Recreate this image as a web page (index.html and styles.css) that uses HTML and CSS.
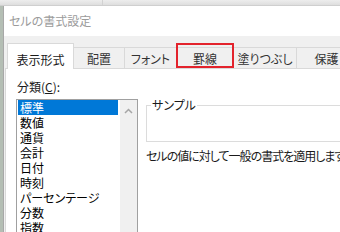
FILE: index.html
```html
<!DOCTYPE html>
<html lang="ja">
<head>
<meta charset="utf-8">
<link rel="stylesheet" href="styles.css">
</head>
<body>
<div class="screen">
  <div class="topband"><div class="seg"></div></div>
  <div class="main">
    <div class="desk"></div>
    <div class="dialog">
      <div class="titlebar"><span class="title">セルの書式設定</span></div>
      <div class="body">
        <div class="tabs">
          <div class="tab active">表示形式</div>
          <div class="tab t-align">配置</div>
          <div class="tab t-font">フォント</div>
          <div class="tab t-border marked">罫線</div>
          <div class="tab t-fill">塗りつぶし</div>
          <div class="tab t-protect">保護</div>
        </div>
        <div class="pane">
          <div class="cat-label">分類(<u>C</u>):</div>
          <div class="row">
            <div class="listbox">
              <ul class="items">
                <li class="sel">標準</li>
                <li>数値</li>
                <li>通貨</li>
                <li>会計</li>
                <li>日付</li>
                <li>時刻</li>
                <li>パーセンテージ</li>
                <li>分数</li>
                <li>指数</li>
              </ul>
              <div class="scrollbar">
                <svg class="up" width="9" height="6" viewBox="0 0 9 6"><polyline points="1,5 4.5,1.5 8,5" fill="none" stroke="#a6a6a6" stroke-width="1.5"/></svg>
              </div>
            </div>
            <div class="right">
              <fieldset class="sample"><legend>サンプル</legend><div class="sample-box"></div></fieldset>
              <p class="desc">セルの値に対して一般の書式を適用します。</p>
            </div>
          </div>
        </div>
      </div>
    </div>
  </div>
</div>
</body>
</html>
```

FILE: styles.css
```css
html, body {
  margin: 0;
  padding: 0;
  background: #ffffff;
}
body {
  width: 340px;
  height: 232px;
  overflow: hidden;
  font-family: "Noto Sans CJK JP", "Noto Sans", sans-serif;
  font-feature-settings: "palt";
  font-size: 12px;
  color: #000;
}
.screen {
  width: 340px;
  height: 232px;
  display: flex;
  flex-direction: column;
  overflow: hidden;
}
.topband {
  height: 6px;
  flex: none;
  background: linear-gradient(#ededed, #dedede);
  border-bottom: 1px solid #cfcfcf;
  box-sizing: border-box;
  display: flex;
}
.topband .seg {
  width: 102px;
  border-right: 1px solid #d2d2d2;
}
.main {
  flex: 1;
  display: flex;
  min-height: 0;
}
.desk {
  width: 3px;
  flex: none;
  background: #b4beb4;
}
.dialog {
  flex: 1;
  display: flex;
  flex-direction: column;
  border-left: 1px solid #a8a8a8;
  min-width: 0;
}
.titlebar {
  height: 30px;
  flex: none;
  background: #ffffff;
  display: flex;
  align-items: center;
  padding-left: 5px;
}
.title {
  color: #9b9b9b;
  line-height: 16px;
}
.body {
  flex: 1;
  background: #f0f0f0;
  padding: 7px 0 0 1px;
  display: flex;
  flex-direction: column;
  min-height: 0;
}
.tabs {
  display: flex;
  align-items: flex-end;
  height: 26px;
  margin: 0 0 -1px 2px;
  flex: none;
}
.tab {
  box-sizing: border-box;
  height: 22px;
  border: 1px solid #d9d9d9;
  border-left: none;
  background: #f0f0f0;
  color: #333;
  text-align: center;
  line-height: 16px;
  padding-top: 3px;
  flex: none;
  white-space: nowrap;
}
.tab.active {
  position: relative;
  z-index: 1;
  width: 67px;
  height: 26px;
  background: #ffffff;
  border-left: 1px solid #d9d9d9;
  border-bottom: none;
  color: #1a1a1a;
  padding-top: 8px;
}
.t-align { width: 51px; }
.t-font { width: 52px; }
.t-border { width: 57px; }
.t-fill { width: 63px; }
.t-protect { width: 60px; }
.marked {
  position: relative;
}
.marked::after {
  content: "";
  position: absolute;
  left: -1px;
  right: -1px;
  top: -5px;
  bottom: 0;
  border: 2px solid #e3232c;
}
.pane {
  flex: 1;
  background: #ffffff;
  border: 1px solid #d9d9d9;
  border-right: none;
  border-bottom: none;
  padding: 10px 0 0 10px;
  min-height: 0;
}
.cat-label {
  line-height: 16px;
  padding-left: 1px;
  color: #1a1a1a;
}
.cat-label u {
  text-underline-offset: 1px;
}
.row {
  display: flex;
  margin-top: 4px;
  align-items: flex-start;
}
.listbox {
  flex: none;
  display: flex;
  border: 1px solid #a0a0a0;
  height: 160px;
}
.items {
  list-style: none;
  margin: 0;
  padding: 0 2px 0 1px;
  width: 100px;
}
.items li {
  height: 15px;
  line-height: 15px;
  padding-left: 2px;
  white-space: nowrap;
}
.items li.sel {
  background: #0078d7;
  color: #ffffff;
}
.scrollbar {
  width: 17px;
  background: #f0f0f0;
  display: flex;
  justify-content: center;
  align-items: flex-start;
}
.scrollbar .up {
  margin-top: 8px;
}
.right {
  margin-left: 8px;
  flex: none;
  width: 300px;
}
.sample {
  margin: 0;
  padding: 0 0 0 4px;
  border: 1px solid #dcdcdc;
  width: 300px;
  box-sizing: border-box;
}
.sample legend {
  padding: 0 1px;
  line-height: 12px;
  color: #1a1a1a;
}
.sample-box {
  height: 30px;
}
.desc {
  margin: 6px 0 0 0;
  line-height: 16px;
  white-space: nowrap;
  letter-spacing: -1px;
  color: #1a1a1a;
}
```
